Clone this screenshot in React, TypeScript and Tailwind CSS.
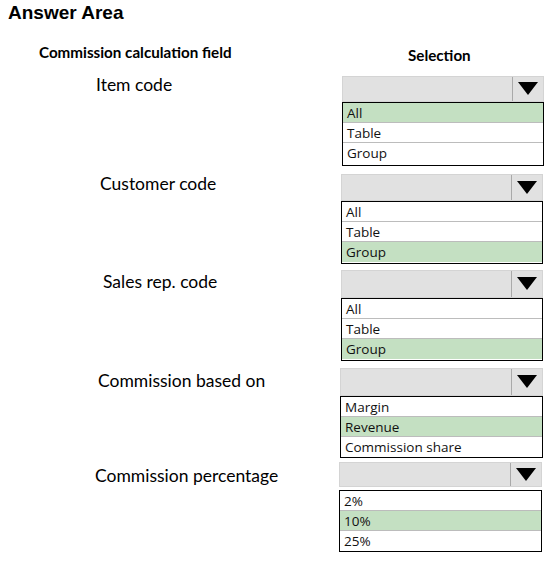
import React from "react"

interface IRow {
    label: string
    labelClass: string
    rowClass: string
    boxClass: string
    headClass: string
    gapClass: string
    options: string[]
    selected: number
    listClass: string
}

const rows: IRow[] = [
    {
        label: "Item code",
        labelClass: "pl-[96px] -mt-[1px]",
        rowClass: "mt-[12px]",
        boxClass: "ml-[342px] w-[202px]",
        headClass: "h-[26px]",
        gapClass: "",
        options: ["All", "Table", "Group"],
        selected: 0,
        listClass: "h-[64px]",
    },
    {
        label: "Customer code",
        labelClass: "pl-[100px] pt-0",
        rowClass: "mt-[8px]",
        boxClass: "ml-[341px] w-[202px]",
        headClass: "h-[27px]",
        gapClass: "",
        options: ["All", "Table", "Group"],
        selected: 2,
        listClass: "h-[63px]",
    },
    {
        label: "Sales rep. code",
        labelClass: "pl-[103px] pt-[2px]",
        rowClass: "mt-[6px]",
        boxClass: "ml-[341px] w-[202px]",
        headClass: "h-[28px]",
        gapClass: "",
        options: ["All", "Table", "Group"],
        selected: 2,
        listClass: "h-[63px]",
    },
    {
        label: "Commission based on",
        labelClass: "pl-[98px] pt-[3px]",
        rowClass: "mt-[7px]",
        boxClass: "ml-[340px] w-[203px]",
        headClass: "h-[28px]",
        gapClass: "",
        options: ["Margin", "Revenue", "Commission share"],
        selected: 1,
        listClass: "h-[62px]",
    },
    {
        label: "Commission percentage",
        labelClass: "pl-[95px] pt-[4px]",
        rowClass: "mt-[4px]",
        boxClass: "ml-[339px] w-[203px]",
        headClass: "h-[25px]",
        gapClass: "mt-[3px]",
        options: ["2%", "10%", "25%"],
        selected: 1,
        listClass: "h-[62px]",
    },
]

function Dropdown({row}: { row: IRow }) {
    return (
        <div className={row.boxClass}>
            <div className={`${row.headClass} flex border border-[#d4d4d4] bg-[#e1e1e1]`}>
                <div className="flex-1"/>
                <div className="flex w-[31px] items-center justify-center border-l border-[#a9a9a9]">
                    <svg width="20" height="14" viewBox="0 0 20 14">
                        <polygon points="0,0 20,0 10,13" fill="#000"/>
                    </svg>
                </div>
            </div>
            <div className={`${row.gapClass} ${row.listClass} border border-black bg-white`}>
                {row.options.map((opt, index) => (
                    <div key={index}
                         className={
                             (index === row.selected ? "bg-[#c4e0c2] " : "bg-white ") +
                             (index < row.options.length - 1 ? "border-b border-[#bcbcbc] " : "") +
                             "h-[20px] pl-[4px] text-[13.5px] leading-[20px] text-[#111]"
                         }>
                        {opt}
                    </div>
                ))}
            </div>
        </div>
    )
}

export default function App() {
    return (
        <div className="relative h-[565px] w-[551px] bg-white font-['Open_Sans',sans-serif] text-black">
            <div className="pl-[8px] pt-[1px] font-['Liberation_Sans',Arial,sans-serif] text-[19px] font-bold leading-[24px]">
                Answer Area
            </div>
            <div className="mt-[18px] flex items-start font-['Lato',sans-serif] text-[15.2px] font-bold leading-[18px]">
                <div className="w-[408px] pl-[39px]">
                    Commission calculation field
                </div>
                <div className="pt-[3px]">
                    Selection
                </div>
            </div>
            {rows.map((row, index) => (
                <div key={index} className={`${row.rowClass} relative`}>
                    <div className={`absolute left-0 top-0 ${row.labelClass} font-['Lato',sans-serif] text-[17.5px] leading-[20px]`}>
                        {row.label}
                    </div>
                    <Dropdown row={row}/>
                </div>
            ))}
        </div>
    )
}
